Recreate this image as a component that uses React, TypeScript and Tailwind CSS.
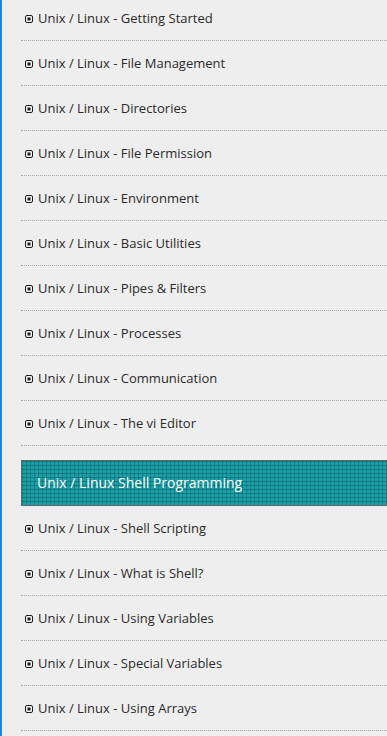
import React from "react";

const group1 = [
  "Unix / Linux - Getting Started",
  "Unix / Linux - File Management",
  "Unix / Linux - Directories",
  "Unix / Linux - File Permission",
  "Unix / Linux - Environment",
  "Unix / Linux - Basic Utilities",
  "Unix / Linux - Pipes & Filters",
  "Unix / Linux - Processes",
  "Unix / Linux - Communication",
  "Unix / Linux - The vi Editor",
];

const group2 = [
  "Unix / Linux - Shell Scripting",
  "Unix / Linux - What is Shell?",
  "Unix / Linux - Using Variables",
  "Unix / Linux - Special Variables",
  "Unix / Linux - Using Arrays",
];

function Bullet() {
  return (
    <svg width="8" height="8" viewBox="0 0 8 8" className="shrink-0">
      <rect x="0.5" y="0.5" width="7" height="7" rx="1.5" fill="#f4f4f4" stroke="#1a1a1a" strokeWidth="1" />
      <rect x="2.5" y="2.5" width="3" height="3" fill="#1a1a1a" />
    </svg>
  );
}

function Row({ label }: { label: string }) {
  return (
    <li className="h-[45px] border-b border-dotted border-[#a8a8a8] flex items-center">
      <div className="flex items-center gap-[5px] pl-[4px] pt-[1px]">
        <Bullet />
        <span className="text-[13px] text-[#2a2a2a] leading-none">{label}</span>
      </div>
    </li>
  );
}

export default function App() {
  return (
    <div
      className="w-[387px] h-[736px] overflow-hidden bg-[#eeeeee] border-l-2 border-[#1b88e0]"
      style={{ fontFamily: '"Open Sans", "Noto Sans", sans-serif' }}
    >
      <div className="ml-[19px] -mt-[4px]">
        <ul>
          {group1.map((l) => (
            <Row key={l} label={l} />
          ))}
        </ul>
        <div className="mt-[14px] h-[46px] flex items-center border-y border-l border-[#666666] bg-[#1ba2a9] bg-[linear-gradient(rgba(0,50,55,0.35)_1px,transparent_1px),linear-gradient(90deg,rgba(0,50,55,0.3)_1px,transparent_1px)] bg-[length:4px_4px] pl-[15px]">
          <span className="text-[14px] text-white leading-none">Unix / Linux Shell Programming</span>
        </div>
        <ul>
          {group2.map((l) => (
            <Row key={l} label={l} />
          ))}
        </ul>
      </div>
    </div>
  );
}
